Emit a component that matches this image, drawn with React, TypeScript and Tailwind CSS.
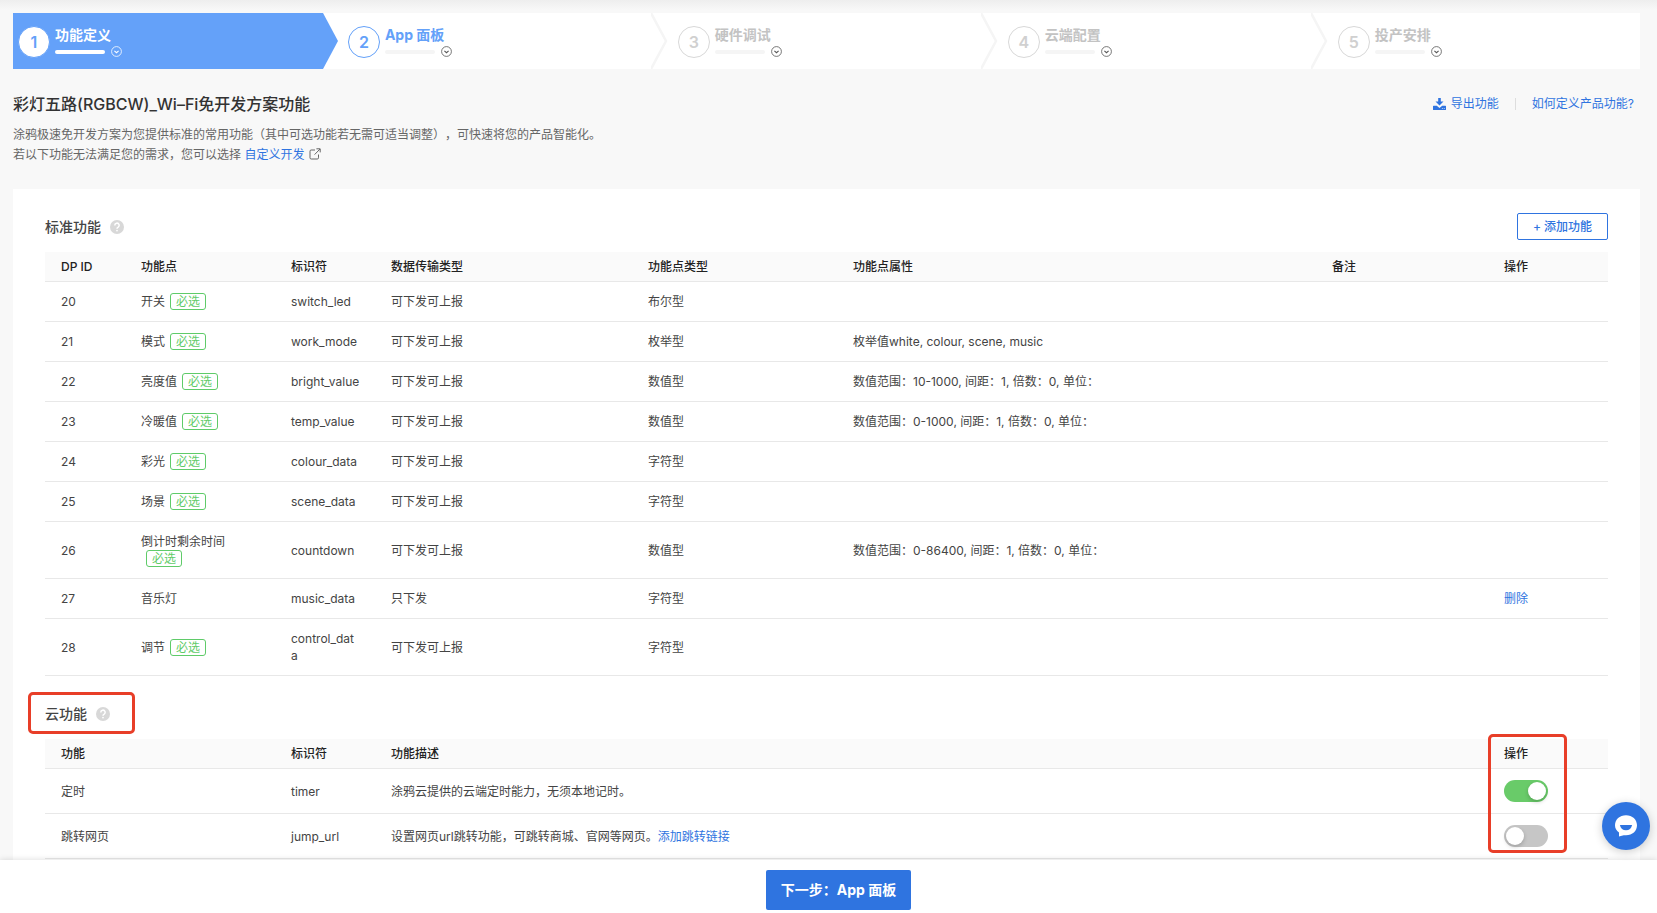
import React from "react";

type StepState = "active" | "next" | "pending";

const steps: { title: string; state: StepState }[] = [
  { title: "功能定义", state: "active" },
  { title: "App 面板", state: "next" },
  { title: "硬件调试", state: "pending" },
  { title: "云端配置", state: "pending" },
  { title: "投产安排", state: "pending" },
];

const stepStyles: Record<StepState, { box: string; circle: string; title: string; bar: string; toggle: string }> = {
  active: {
    box: "bg-[#64a1f9]",
    circle: "border-[#64a1f9] bg-white text-[#64a1f9]",
    title: "text-white",
    bar: "bg-white",
    toggle: "text-white",
  },
  next: {
    box: "bg-white",
    circle: "border-[#64a1f9] bg-white text-[#64a1f9]",
    title: "text-[#64a1f9]",
    bar: "bg-[#f5f5f5]",
    toggle: "text-[#555555]",
  },
  pending: {
    box: "bg-white",
    circle: "border-[#d8d8d8] bg-white text-[#d0d0d0]",
    title: "text-[#c3c3c3]",
    bar: "bg-[#f5f5f5]",
    toggle: "text-[#555555]",
  },
};

interface Feature {
  id: number;
  name: string;
  required: boolean;
  code: string;
  transfer: string;
  type: string;
  props?: string;
}

const features: Feature[] = [
  { id: 20, name: "开关", required: true, code: "switch_led", transfer: "可下发可上报", type: "布尔型" },
  { id: 21, name: "模式", required: true, code: "work_mode", transfer: "可下发可上报", type: "枚举型", props: "枚举值white, colour, scene, music" },
  { id: 22, name: "亮度值", required: true, code: "bright_value", transfer: "可下发可上报", type: "数值型", props: "数值范围：10-1000, 间距：1, 倍数：0, 单位：" },
  { id: 23, name: "冷暖值", required: true, code: "temp_value", transfer: "可下发可上报", type: "数值型", props: "数值范围：0-1000, 间距：1, 倍数：0, 单位：" },
  { id: 24, name: "彩光", required: true, code: "colour_data", transfer: "可下发可上报", type: "字符型" },
  { id: 25, name: "场景", required: true, code: "scene_data", transfer: "可下发可上报", type: "字符型" },
  { id: 26, name: "倒计时剩余时间", required: true, code: "countdown", transfer: "可下发可上报", type: "数值型", props: "数值范围：0-86400, 间距：1, 倍数：0, 单位：" },
  { id: 27, name: "音乐灯", required: false, code: "music_data", transfer: "只下发", type: "字符型" },
  { id: 28, name: "调节", required: true, code: "control_data", transfer: "可下发可上报", type: "字符型" },
];

function CircleChevron({ className }: { className: string }) {
  return (
    <svg className={className} width="11" height="11" viewBox="0 0 11 11" fill="none" stroke="currentColor" aria-hidden="true">
      <circle cx="5.5" cy="5.5" r="4.9" strokeWidth="0.8" />
      <path d="M3.4 4.8 5.5 6.7 7.6 4.8" strokeWidth="1.1" />
    </svg>
  );
}

function HelpIcon() {
  return (
    <svg width="14" height="14" viewBox="0 0 14 14" fill="none" aria-hidden="true">
      <circle cx="7" cy="7" r="7" fill="#d8d8d8" />
      <path d="M4.800 5.500a2.200 2.200 0 1 1 3.400 1.700C7.300 7.700 7 8 7 8.800" stroke="#fff" strokeWidth="1.500" />
      <circle cx="7" cy="10.600" r="0.900" fill="#fff" />
    </svg>
  );
}

function DownloadIcon() {
  return (
    <svg width="13" height="12" viewBox="0 0 13 12" fill="currentColor" aria-hidden="true">
      <path d="M5.2 0h2.6v3.6h2.7L6.5 7.6 2.5 3.6h2.7z" />
      <path d="M0.6 7.7h3.2l2.7 2.2 2.7-2.2h3.2q.6 0 .6.6v3.1q0 .6-.6.6H.6q-.6 0-.6-.6V8.3q0-.6.6-.6z" />
      <path d="M8.9 10.3h.9v.7h-.9zM10.8 10.3h.9v.7h-.9z" fill="#f8f8f8" />
    </svg>
  );
}

function ExternalIcon() {
  return (
    <svg className="ml-px inline-block align-[-1px]" width="12" height="12" viewBox="0 0 12 12" fill="none" stroke="#666666" aria-hidden="true">
      <path d="M6 2H2.2Q1 2 1 3.2v6.6Q1 11 2.2 11h6.1q1.2 0 1.2-1.2V6.5M7.4.8h3.8v3.6M11 1 5.6 6.6" />
    </svg>
  );
}

function Step({ index, title, state }: { index: number; title: string; state: StepState }) {
  const s = stepStyles[state];
  const last = index === steps.length;
  return (
    <li className={`relative flex items-start ${last ? "grow-[307]" : "grow-[330]"} basis-0 pt-[13px] pl-[5px] ${s.box}`}>
      <span className={`flex size-8 items-center justify-center rounded-full border text-base font-semibold ${s.circle}`}>{index}</span>
      <div className="ml-[5px] flex flex-col gap-[2px]">
        <span className={`text-sm leading-[18px] font-bold ${s.title}`}>{title}</span>
        <span className="flex items-center gap-[6px]">
          <span className={`h-1 w-[50px] rounded-full ${s.bar}`} />
          <button type="button" aria-label={`展开${title}`} className={s.toggle}>
            <CircleChevron className="block" />
          </button>
        </span>
      </div>
      {!last && (
        <svg className="absolute top-0 right-[4px] z-10 h-full w-[18px]" viewBox="0 0 18 56" fill="none" aria-hidden="true">
          {state === "active" ? (
            <>
              <path d="M1 0h17v56H1z" fill="#fff" />
              <path d="M0 0h2l15 28L2 56H0z" fill="#64a1f9" />
            </>
          ) : (
            <path d="M0 0 15 28 0 56" stroke="#f5f5f5" strokeWidth="2.500" />
          )}
        </svg>
      )}
      {state === "active" && <span className="absolute inset-y-0 right-0 w-1 bg-white" />}
    </li>
  );
}

function Head({ children }: { children?: React.ReactNode }) {
  return <th className="px-4 py-[6px] text-left font-medium text-[#222222]">{children}</th>;
}

function Cell({ children }: { children?: React.ReactNode }) {
  return <td className="py-[11px] pr-[15px] pl-4 align-middle break-words">{children}</td>;
}

function SwitchCell({ label, defaultChecked }: { label: string; defaultChecked?: boolean }) {
  return (
    <td className="px-4 py-[11px] align-middle">
      <label className="relative block h-[22px] w-11 cursor-pointer">
        <input type="checkbox" role="switch" aria-label={label} defaultChecked={defaultChecked} className="peer sr-only" />
        <span className="block h-full w-full rounded-full bg-[#c6c6c6] peer-checked:bg-[#69cb69]" />
        <span className="absolute top-[2px] left-[2px] size-[18px] rounded-full bg-white shadow-[0_2px_4px_rgba(0,0,0,0.2)] peer-checked:left-6" />
      </label>
    </td>
  );
}

export default function App() {
  return (
    <div className="relative flex h-screen flex-col overflow-hidden bg-[#f8f8f8] font-['Inter','Noto_Sans_CJK_SC',sans-serif] text-xs leading-[17px] text-[#444444] [text-spacing-trim:space-all]">
      <div className="absolute inset-x-0 top-0 h-[10px] bg-linear-to-b from-[#eeeeee] to-[#f8f8f8]" />
      <main className="relative min-h-0 flex-1 overflow-hidden pt-[13px] pr-[17px] pl-[13px]">
        <ol className="flex h-14">
          {steps.map((s, i) => (
            <Step key={s.title} index={i + 1} title={s.title} state={s.state} />
          ))}
        </ol>

        <header className="flex items-start justify-between pt-[23px] pr-[6px]">
          <div>
            <h1 className="text-base leading-6 font-medium text-[#333333]">彩灯五路(RGBCW)_Wi–Fi免开发方案功能</h1>
            <p className="mt-[9px] leading-5 text-[#666666]">
              涂鸦极速免开发方案为您提供标准的常用功能（其中可选功能若无需可适当调整），可快速将您的产品智能化。
              <br />
              若以下功能无法满足您的需求，您可以选择{" "}
              <a href="#custom" className="text-[#2f74e0]">自定义开发</a> <ExternalIcon />
            </p>
          </div>
          <div className="flex items-center leading-6 text-[#2f74e0]">
            <button type="button" className="flex items-center gap-[5px]">
              <DownloadIcon />
              导出功能
            </button>
            <span className="mx-4 h-3 w-px bg-[#dddddd]" />
            <a href="#help">如何定义产品功能?</a>
          </div>
        </header>

        <section className="mt-6 bg-white px-8 pt-6 pb-8">
          <div className="flex h-[27px] items-center justify-between">
            <h2 className="flex items-center gap-[9px] text-sm font-medium text-[#444444]">
              标准功能 <HelpIcon />
            </h2>
            <button type="button" className="h-[27px] w-[91px] rounded-xs border border-[#2f74e0] font-medium text-[#2f74e0]">
              + 添加功能
            </button>
          </div>
          <table className="mt-3 w-full table-fixed border-collapse">
            <colgroup>
              <col className="w-20" />
              <col className="w-[150px]" />
              <col className="w-[100px]" />
              <col className="w-[257px]" />
              <col className="w-[205px]" />
              <col />
              <col className="w-[172px]" />
              <col className="w-[120px]" />
            </colgroup>
            <thead>
              <tr className="border-b border-[#e8e8e8] bg-[#fafafa]">
                <Head>DP ID</Head>
                <Head>功能点</Head>
                <Head>标识符</Head>
                <Head>数据传输类型</Head>
                <Head>功能点类型</Head>
                <Head>功能点属性</Head>
                <Head>备注</Head>
                <Head>操作</Head>
              </tr>
            </thead>
            <tbody>
              {features.map((f) => (
                <tr key={f.id} className="border-b border-[#e8e8e8]">
                  <Cell>{f.id}</Cell>
                  <Cell>
                    {f.name}
                    {f.required && (
                      <span className="ml-[5px] inline-block rounded-[3px] border border-[#5fcb69] px-[5px] align-top leading-[15px] text-[#5fcb69]">
                        必选
                      </span>
                    )}
                  </Cell>
                  <Cell>{f.code}</Cell>
                  <Cell>{f.transfer}</Cell>
                  <Cell>{f.type}</Cell>
                  <Cell>{f.props}</Cell>
                  <Cell />
                  <Cell>
                    {!f.required && (
                      <button type="button" className="block text-[#2f74e0]">
                        删除
                      </button>
                    )}
                  </Cell>
                </tr>
              ))}
            </tbody>
          </table>

          <div className="relative mt-6 flex h-[27px] items-center">
            <h2 className="flex items-center gap-[9px] text-sm font-medium text-[#444444]">
              云功能 <HelpIcon />
            </h2>
            <span className="pointer-events-none absolute top-[-8px] left-[-17px] h-[42px] w-[107px] rounded-[5px] border-3 border-[#e83e28]" />
          </div>
          <div className="relative mt-3">
            <table className="w-full table-fixed border-collapse">
              <colgroup>
                <col className="w-[230px]" />
                <col className="w-[100px]" />
                <col />
                <col className="w-[120px]" />
              </colgroup>
              <thead>
                <tr className="border-b border-[#e8e8e8] bg-[#fafafa]">
                  <Head>功能</Head>
                  <Head>标识符</Head>
                  <Head>功能描述</Head>
                  <Head>操作</Head>
                </tr>
              </thead>
              <tbody>
                <tr className="border-b border-[#e8e8e8]">
                  <Cell>定时</Cell>
                  <Cell>timer</Cell>
                  <Cell>涂鸦云提供的云端定时能力，无须本地记时。</Cell>
                  <SwitchCell label="定时" defaultChecked />
                </tr>
                <tr className="border-b border-[#e8e8e8]">
                  <Cell>跳转网页</Cell>
                  <Cell>jump_url</Cell>
                  <Cell>
                    设置网页url跳转功能，可跳转商城、官网等网页。
                    <a href="#jump" className="text-[#2f74e0]">添加跳转链接</a>
                  </Cell>
                  <SwitchCell label="跳转网页" />
                </tr>
              </tbody>
            </table>
            <span className="pointer-events-none absolute top-[-5px] right-[41px] h-[119px] w-[79px] rounded-[5px] border-3 border-[#e83e28]" />
          </div>
        </section>
      </main>

      <footer className="relative flex h-[53px] items-start justify-center bg-white pt-[10px] pl-5 shadow-[0_0_6px_rgba(0,0,0,0.15)]">
        <button type="button" className="h-10 w-[145px] rounded-xs bg-[#2f74e0] text-sm font-bold text-white">
          下一步：App 面板
        </button>
      </footer>

      <button type="button" aria-label="在线客服" className="absolute right-[7px] bottom-[63px] flex size-12 items-center justify-center rounded-full bg-[#2f74e0] shadow-[0_2px_10px_rgba(0,0,0,0.2)]">
        <svg width="24" height="24" viewBox="0 0 24 24" aria-hidden="true">
          <path d="M12 1.200c6.400 0 11 4.300 11 10s-4.600 10-11 10c-1.600 0-3 .1-4.200.5L5 22.600V18.500C2.400 16.700 1 14.200 1 11.200c0-5.700 4.600-10 11-10z" fill="#fff" />
          <path d="M5.900 11h12.200c-.6 3.300-3 5.300-6.100 5.300S6.500 14.300 5.900 11z" fill="#2f74e0" />
        </svg>
      </button>
    </div>
  );
}
